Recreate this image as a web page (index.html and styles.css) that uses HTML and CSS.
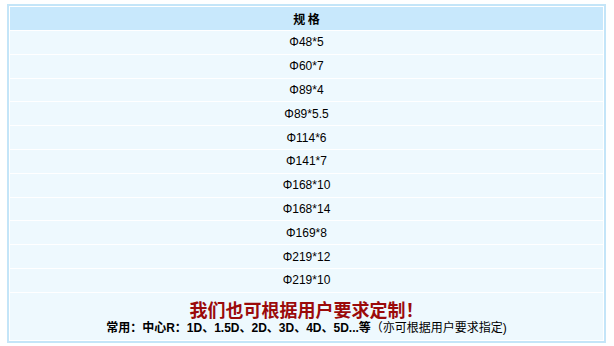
FILE: index.html
```html
<!DOCTYPE html>
<html>
<head>
<meta charset="utf-8">
<link rel="stylesheet" href="styles.css">
</head>
<body>
<table class="spec">
  <thead>
    <tr><th>规 格</th></tr>
  </thead>
  <tbody>
    <tr><td>Φ48*5</td></tr>
    <tr><td>Φ60*7</td></tr>
    <tr><td>Φ89*4</td></tr>
    <tr><td>Φ89*5.5</td></tr>
    <tr><td>Φ114*6</td></tr>
    <tr><td>Φ141*7</td></tr>
    <tr><td>Φ168*10</td></tr>
    <tr><td>Φ168*14</td></tr>
    <tr><td>Φ169*8</td></tr>
    <tr><td>Φ219*12</td></tr>
    <tr><td>Φ219*10</td></tr>
    <tr>
      <td class="note">
        <div class="custom">我们也可根据用户要求定制！</div>
        <div class="common">常用：中心R：1D、1.5D、2D、3D、4D、5D...等<span class="aside">（亦可根据用户要求指定)</span></div>
      </td>
    </tr>
  </tbody>
</table>
</body>
</html>
```
FILE: styles.css
```css
html, body {
  margin: 0;
  padding: 0;
  background: #ffffff;
}
body {
  padding: 4px 0 0 7px;
  font-family: "Liberation Sans", Arial, "Noto Sans CJK SC", sans-serif;
  font-size: 12px;
  color: #000;
}
.spec {
  width: 599px;
  border: 2px solid #c4e5f8;
  border-collapse: separate;
  border-spacing: 1px;
  background: #ffffff;
}
.spec th {
  height: 23px;
  padding: 0;
  background: #c8e8fc;
  font-weight: bold;
  font-size: 12px;
  text-align: center;
  font-family: "Noto Sans CJK SC", sans-serif;
}
.spec td {
  height: 22.8px;
  padding: 0;
  background: #eef9fe;
  text-align: center;
  line-height: 14px;
}
.spec td.note {
  height: auto;
  padding: 5px 0 3px;
}
.custom {
  font-family: "Noto Sans CJK SC", sans-serif;
  font-size: 18px;
  font-weight: bold;
  color: #9b0a0a;
  line-height: 22px;
}
.common {
  font-weight: bold;
  line-height: 17px;
  font-family: "Liberation Sans", "Noto Sans CJK SC", sans-serif;
}
.aside {
  font-weight: normal;
}
```
